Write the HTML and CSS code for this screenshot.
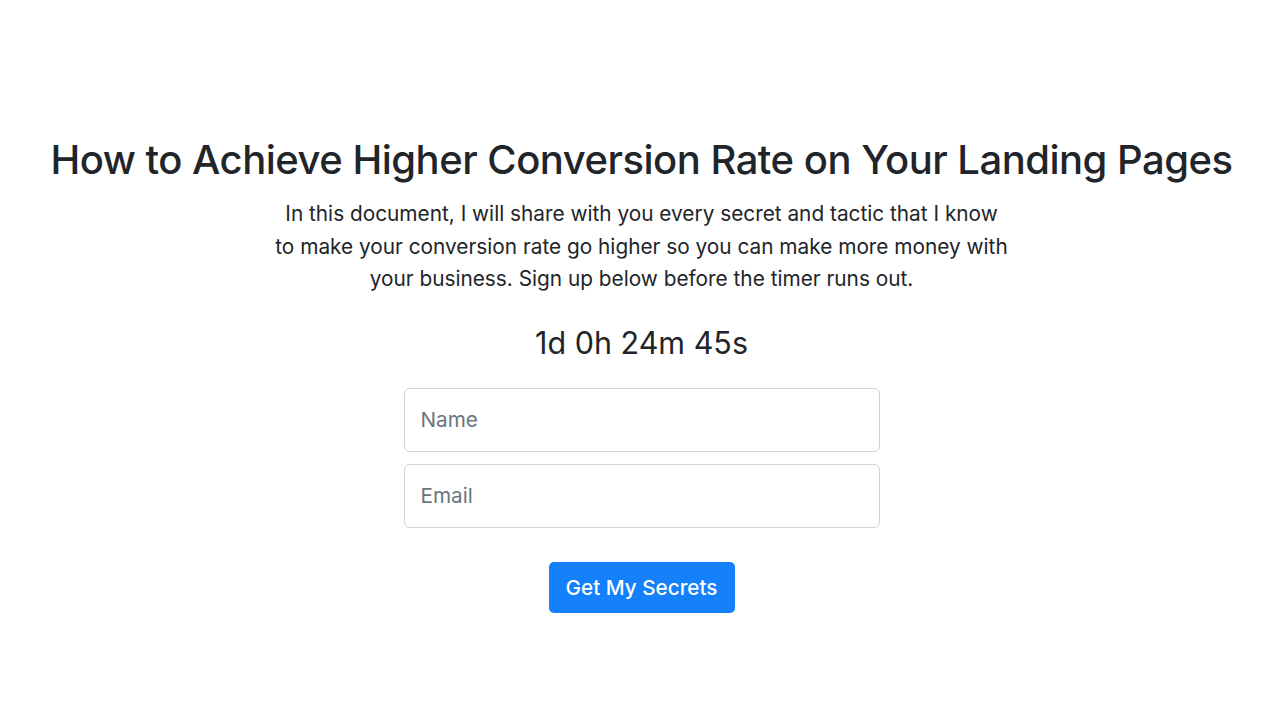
FILE: index.html
```html
<!DOCTYPE html>
<html lang="en">
<head>
<meta charset="utf-8">
<title>Landing</title>
<link rel="stylesheet" href="styles.css">
</head>
<body>
<main class="page">
  <h1 class="title">How to Achieve Higher Conversion Rate on Your Landing Pages</h1>
  <p class="lead">In this document, I will share with you every secret and tactic that I know to make your conversion rate go higher so you can make more money with your business. Sign up below before the timer runs out.</p>
  <div class="timer">1d 0h 24m 45s</div>
  <form class="form">
    <input class="field" type="text" placeholder="Name">
    <input class="field" type="email" placeholder="Email">
    <button class="btn" type="button">Get My Secrets</button>
  </form>
</main>
</body>
</html>
```
FILE: styles.css
```css
html, body {
  margin: 0;
  padding: 0;
  background: #fff;
}
body {
  font-family: Inter, "Noto Sans", "Liberation Sans", sans-serif;
  color: #212529;
}
.page {
  display: flex;
  flex-direction: column;
  align-items: center;
  padding-top: 134px;
  padding-left: 3px;
}
.title {
  margin: 0;
  font-size: 40px;
  font-weight: 500;
  line-height: 52px;
  letter-spacing: -0.5px;
  text-align: center;
  white-space: nowrap;
}
.lead {
  margin: 12px 0 0;
  max-width: 735px;
  font-size: 20.8px;
  line-height: 32.5px;
  text-align: center;
}
.timer {
  margin-top: 27px;
  font-size: 30.5px;
  line-height: 40px;
}
.form {
  margin-top: 25px;
  display: flex;
  flex-direction: column;
  align-items: center;
  gap: 12px;
}
.field {
  box-sizing: border-box;
  width: 476px;
  height: 64px;
  padding: 0 16px;
  border: 1.5px solid #ced4da;
  border-radius: 6px;
  font-family: inherit;
  font-size: 20.7px;
  color: #495057;
  background: #fff;
}
.field::placeholder {
  color: #6c757d;
}
.btn {
  margin-top: 22px;
  box-sizing: border-box;
  width: 186px;
  height: 51px;
  border: none;
  border-radius: 5px;
  background: #1580fb;
  color: #fff;
  font-family: inherit;
  font-size: 20.7px;
  font-weight: 500;
  cursor: pointer;
}
```
